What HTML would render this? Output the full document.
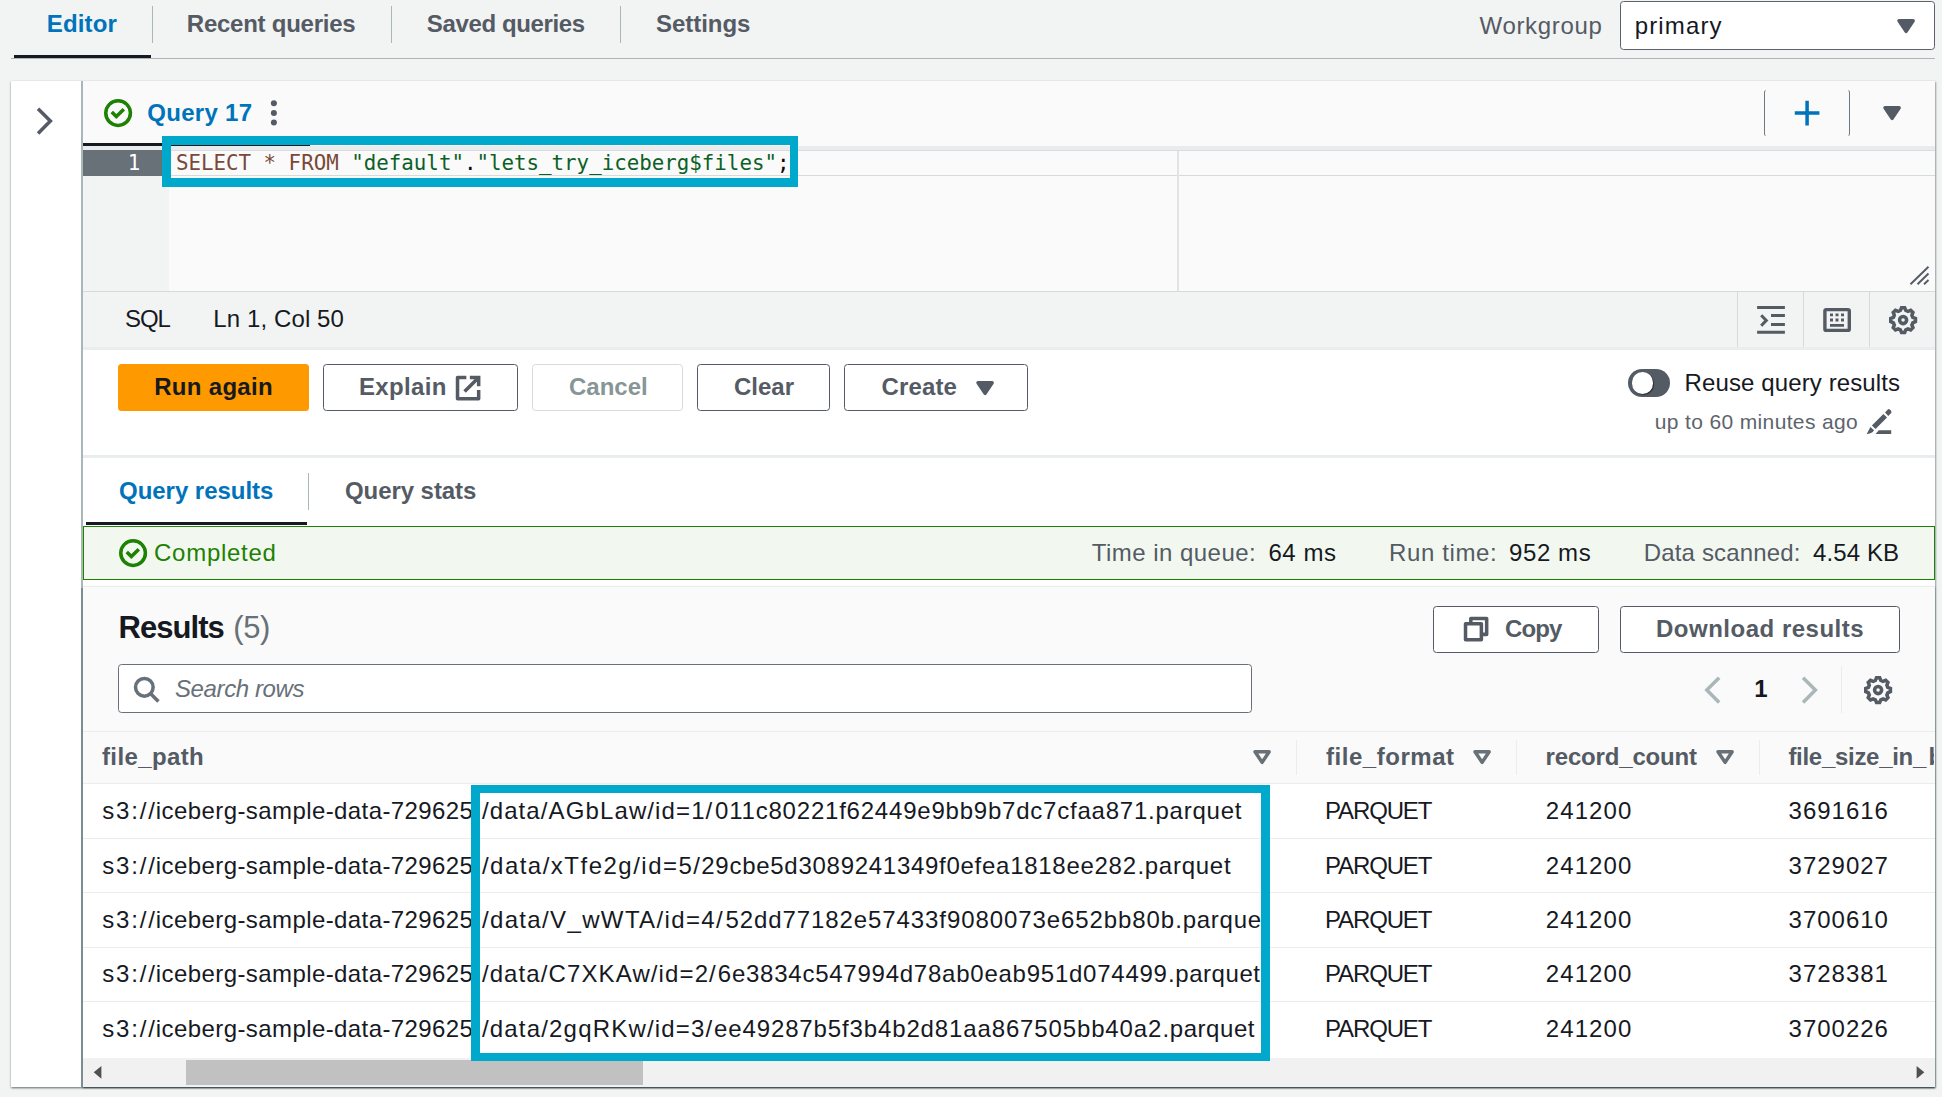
<!DOCTYPE html>
<html lang="en">
<head>
<meta charset="utf-8">
<title>Athena query editor</title>
<style>
html,body{margin:0;padding:0}
body{width:1942px;height:1097px;position:relative;overflow:hidden;background:#f2f3f3;font-family:"Liberation Sans","DejaVu Sans",sans-serif;}
.a{position:absolute;box-sizing:border-box}
.t{position:absolute;white-space:pre;font-kerning:normal}
.m{font-family:"DejaVu Sans Mono","Liberation Mono",monospace}
.clip{position:absolute;overflow:hidden}
.ic{position:absolute;width:28.2px;height:28.2px;overflow:visible;fill:none;stroke:#545b64;stroke-width:2}
.btn{position:absolute;box-sizing:border-box;border:1.5px solid #545b64;border-radius:3.5px;background:#fff}
</style>
</head>
<body>
<!-- top tab bar -->
<div class="a" style="left:11px;top:58px;width:1924px;height:1.3px;background:#aab7b8"></div>
<div class="a" style="left:14px;top:54.6px;width:137px;height:3.6px;background:#16191f"></div>
<div class="a" style="left:152px;top:6px;width:1px;height:37px;background:#aab7b8"></div>
<div class="a" style="left:391px;top:6px;width:1px;height:37px;background:#aab7b8"></div>
<div class="a" style="left:620px;top:6px;width:1px;height:37px;background:#aab7b8"></div>
<div class="a" style="left:1620px;top:1px;width:315px;height:49px;border:1.5px solid #5b626b;border-radius:3.5px;background:#fff"></div>
<svg class="ic" style="left:1891.8px;top:12.15px" viewBox="0 0 16 16"><path d="M4 5h8l-4 6-4-6z" fill="#545b64" stroke-linejoin="round"/></svg>

<!-- main container -->
<div class="a" style="left:11px;top:81px;width:1924px;height:1006px;background:#fff;box-shadow:0 1px 2px 0 rgba(0,28,36,.45),1px 1px 2px 0 rgba(0,28,36,.25)"></div>
<svg class="ic" style="left:30.9px;top:107.1px" viewBox="0 0 16 16"><path d="M4 1l7 7-7 7"/></svg>
<!-- query tab bar -->
<div class="a" style="left:83px;top:81px;width:1852px;height:65px;background:#fafafa"></div>
<div class="a" style="left:83px;top:146px;width:1852px;height:4px;background:#e9ebed"></div>
<div class="a" style="left:83px;top:143px;width:227px;height:2.9px;background:#16191f"></div>
<svg class="ic" style="left:103.8px;top:98.9px;stroke:#1d8102" viewBox="0 0 16 16"><circle cx="8" cy="8" r="7"/><path d="M4.4 7.4L7 10l4.25-4.25"/></svg>
<svg class="a" style="left:268px;top:98px;width:12px;height:30px" viewBox="0 0 12 30"><circle cx="5.9" cy="5.2" r="3" fill="#545b64"/><circle cx="5.9" cy="14.9" r="3" fill="#545b64"/><circle cx="5.9" cy="24.5" r="3" fill="#545b64"/></svg>
<div class="a" style="left:1764px;top:90px;width:86px;height:46px;border-left:1px solid #6f7880;border-right:1px solid #6f7880;border-radius:2.5px"></div>
<svg class="ic" style="left:1792.5px;top:98.9px;stroke:#0073bb" viewBox="0 0 16 16"><path d="M8 1v14M15 8H1"/></svg>
<svg class="ic" style="left:1877.8px;top:98.9px" viewBox="0 0 16 16"><path d="M4 5h8l-4 6-4-6z" fill="#545b64" stroke-linejoin="round"/></svg>

<!-- editor -->
<div class="a" style="left:83px;top:150px;width:1852px;height:142px;background:#fafafa;border-top:1px solid #d9dddd;border-bottom:1px solid #d5dbdb"></div>
<div class="a" style="left:83px;top:150px;width:86px;height:141px;background:#f2f3f3"></div>
<div class="a" style="left:169px;top:151px;width:1766px;height:24.9px;border-bottom:1px solid #d5dbdb"></div>
<div class="a" style="left:83px;top:150px;width:86px;height:26px;background:#687078"></div>
<div class="a" style="left:1177px;top:151px;width:1.5px;height:140px;background:#e2e3e3"></div>
<svg class="a" style="left:1906px;top:262px;width:26px;height:26px" viewBox="0 0 26 26"><path d="M4.5 22.2L22.5 4.7M11.5 22.2L22.5 11.5M18 22.2L22.5 18" stroke="#545b64" stroke-width="1.9" fill="none"/></svg>

<!-- status bar -->
<div class="a" style="left:83px;top:292px;width:1852px;height:55.3px;background:#f2f3f3"></div>
<div class="a" style="left:83px;top:347.3px;width:1852px;height:2.9px;background:#eaeded"></div>
<div class="a" style="left:1737.2px;top:292px;width:1px;height:55px;background:#d5dbdb"></div>
<div class="a" style="left:1803.1px;top:292px;width:1px;height:55px;background:#d5dbdb"></div>
<div class="a" style="left:1868.9px;top:292px;width:1px;height:55px;background:#d5dbdb"></div>
<svg class="a" style="left:1750px;top:300px;width:40px;height:40px" viewBox="1750 300 40 40"><path d="M1757.1 307.5H1784.9M1771 315.6H1784.9M1771 324.5H1784.9M1757.1 332.2H1784.9" stroke="#545b64" stroke-width="3" fill="none"/><path d="M1761.2 315.2L1766.3 320.4L1761.2 325.8" stroke="#545b64" stroke-width="3" fill="none"/></svg>
<svg class="a" style="left:1818px;top:302px;width:38px;height:36px" viewBox="1818 302 38 36"><rect x="1824.9" y="309.6" width="24.4" height="20.8" rx="1.5" stroke="#545b64" stroke-width="3.4" fill="none"/><path d="M1830 313.4h3v2.8h-3zM1835.5 313.4h3v2.8h-3zM1841 313.4h3v2.8h-3zM1830 318.6h3v2.8h-3zM1835.5 318.6h3v2.8h-3zM1841 318.6h3v2.8h-3zM1830 323.9h14v2.9h-14z" fill="#545b64"/></svg>
<svg class="ic" style="left:1888.95px;top:306.05px;stroke:#545b64" viewBox="0 0 16 16"><path d="M6.45 2.50L7.10 1.00L8.90 1.00L9.55 2.50L10.79 3.01L12.31 2.41L13.59 3.69L12.99 5.21L13.50 6.45L15.00 7.10L15.00 8.90L13.50 9.55L12.99 10.79L13.59 12.31L12.31 13.59L10.79 12.99L9.55 13.50L8.90 15.00L7.10 15.00L6.45 13.50L5.21 12.99L3.69 13.59L2.41 12.31L3.01 10.79L2.50 9.55L1.00 8.90L1.00 7.10L2.50 6.45L3.01 5.21L2.41 3.69L3.69 2.41L5.21 3.01Z"/><circle cx="8" cy="8" r="2"/></svg>

<!-- buttons row -->
<div class="a" style="left:118px;top:364px;width:191px;height:47px;background:#ff9900;border-radius:3.5px"></div>
<div class="btn" style="left:323px;top:364px;width:195px;height:47px"></div>
<div class="btn" style="left:532px;top:364px;width:151px;height:47px;border-color:#d5dbdb"></div>
<div class="btn" style="left:697px;top:364px;width:133px;height:47px"></div>
<div class="btn" style="left:844px;top:364px;width:184px;height:47px"></div>
<svg class="ic" style="left:454.2px;top:373.6px" viewBox="0 0 16 16"><path d="M10 2h4v4" stroke-linecap="square"/><path d="M6 10l8-8"/><path d="M14 9.048V14H2V2h5" stroke-linejoin="round"/></svg>
<svg class="ic" style="left:970.9px;top:374.2px" viewBox="0 0 16 16"><path d="M4 5h8l-4 6-4-6z" fill="#545b64" stroke-linejoin="round"/></svg>
<!-- toggle -->
<div class="a" style="left:1628px;top:369px;width:42px;height:28px;border-radius:14px;background:#545b64"></div>
<div class="a" style="left:1631.5px;top:372.3px;width:21.5px;height:21.5px;border-radius:50%;background:#fff;box-shadow:1px 1px 1px rgba(0,0,0,.5)"></div>
<svg class="a" style="left:1860px;top:404px;width:36px;height:34px" viewBox="1860 404 36 34"><path d="M1866.6 434.3L1870.4 427L1874.1 430.3Q1872.6 432.6 1870.4 433.2ZM1871.9 425.5L1883.4 414L1887 417.5L1875.5 429ZM1885 412.4L1888.3 409.1Q1891.6 409.6 1891.4 412.8L1888.3 415.9ZM1875.5 434.1L1878.8 430.3H1891.2V434.1Z" fill="#545b64"/></svg>

<!-- result tabs -->
<div class="a" style="left:83px;top:455.2px;width:1852px;height:2.9px;background:#eaeded"></div>
<div class="a" style="left:308px;top:473px;width:1px;height:37px;background:#aab7b8"></div>
<div class="a" style="left:86px;top:522px;width:221px;height:3.2px;background:#16191f"></div>

<!-- completed -->
<div class="a" style="left:83px;top:525.8px;width:1852px;height:54px;background:#f2f8f0;border:1.2px solid #1d8102"></div>
<svg class="ic" style="left:118.9px;top:538.9px;stroke:#1d8102" viewBox="0 0 16 16"><circle cx="8" cy="8" r="7"/><path d="M4.4 7.4L7 10l4.25-4.25"/></svg>

<!-- results -->
<div class="a" style="left:83px;top:586px;width:1852px;height:501px;box-shadow:0 1px 1.5px 0 rgba(0,28,36,.7)"></div>
<div class="a" style="left:83px;top:586px;width:1852px;height:472px;background:#fafafa;border-top:1px solid #eaeded"></div>
<div class="btn" style="left:1433px;top:606px;width:166px;height:47px"></div>
<div class="btn" style="left:1620px;top:606px;width:280px;height:47px"></div>
<svg class="ic" style="left:1462.2px;top:614.8px" viewBox="0 0 16 16"><path d="M2 5h9v9H2z" stroke-linejoin="round"/><path d="M5 5V2h9v9h-3" stroke-linejoin="round"/></svg>
<div class="a" style="left:118px;top:664px;width:1134px;height:48.6px;border:1.5px solid #687078;border-radius:3.5px;background:#fff"></div>
<svg class="ic" style="left:132.2px;top:675.2px;stroke:#687078" viewBox="0 0 16 16"><circle cx="7" cy="7" r="5"/><path d="M15 15l-4.5-4.5"/></svg>
<svg class="ic" style="left:1697.9px;top:676.2px;stroke:#aab7b8" viewBox="0 0 16 16"><path d="M12 1L5 8l7 7"/></svg>
<svg class="ic" style="left:1795.9px;top:676.2px;stroke:#aab7b8" viewBox="0 0 16 16"><path d="M4 1l7 7-7 7"/></svg>
<div class="a" style="left:1841px;top:666px;width:1px;height:47px;background:#eaeded"></div>
<svg class="ic" style="left:1863.9px;top:675.6px;stroke:#545b64" viewBox="0 0 16 16"><path d="M6.45 2.50L7.10 1.00L8.90 1.00L9.55 2.50L10.79 3.01L12.31 2.41L13.59 3.69L12.99 5.21L13.50 6.45L15.00 7.10L15.00 8.90L13.50 9.55L12.99 10.79L13.59 12.31L12.31 13.59L10.79 12.99L9.55 13.50L8.90 15.00L7.10 15.00L6.45 13.50L5.21 12.99L3.69 13.59L2.41 12.31L3.01 10.79L2.50 9.55L1.00 8.90L1.00 7.10L2.50 6.45L3.01 5.21L2.41 3.69L3.69 2.41L5.21 3.01Z"/><circle cx="8" cy="8" r="2"/></svg>

<!-- table -->
<div class="a" style="left:83px;top:731px;width:1852px;height:53px;background:#fafafa;border-top:1px solid #eaeded;border-bottom:1px solid #eaeded"></div>
<div class="a" style="left:83px;top:784px;width:1852px;height:274px;background:#fff"></div>
<div class="a" style="left:83px;top:838px;width:1852px;height:1px;background:#eaeded"></div>
<div class="a" style="left:83px;top:892px;width:1852px;height:1px;background:#eaeded"></div>
<div class="a" style="left:83px;top:947px;width:1852px;height:1px;background:#eaeded"></div>
<div class="a" style="left:83px;top:1001px;width:1852px;height:1px;background:#eaeded"></div>
<div class="a" style="left:1296px;top:740px;width:1px;height:35px;background:#eaeded"></div>
<div class="a" style="left:1516.3px;top:740px;width:1px;height:35px;background:#eaeded"></div>
<div class="a" style="left:1759px;top:740px;width:1px;height:35px;background:#eaeded"></div>
<svg class="ic" style="left:1247.9px;top:742.7px;stroke:#687078" viewBox="0 0 16 16"><path d="M4 5h8l-4 6-4-6z" stroke-linejoin="round"/></svg>
<svg class="ic" style="left:1467.8px;top:742.7px;stroke:#687078" viewBox="0 0 16 16"><path d="M4 5h8l-4 6-4-6z" stroke-linejoin="round"/></svg>
<svg class="ic" style="left:1710.6px;top:742.7px;stroke:#687078" viewBox="0 0 16 16"><path d="M4 5h8l-4 6-4-6z" stroke-linejoin="round"/></svg>

<!-- scrollbar -->
<div class="a" style="left:83px;top:1058px;width:1852px;height:29px;background:#f1f1f1"></div>
<div class="a" style="left:186px;top:1060px;width:457px;height:25px;background:#c1c1c1"></div>
<svg class="a" style="left:90px;top:1062px;width:16px;height:20px" viewBox="0 0 16 20"><path d="M3.7 10.3L11.4 3.9V16.8z" fill="#505050"/></svg>
<svg class="a" style="left:1912.3px;top:1062px;width:16px;height:20px" viewBox="0 0 16 20"><path d="M12.3 10.3L4.6 3.9V16.8z" fill="#505050"/></svg>

<!-- sidebar border -->
<div class="a" style="left:81.2px;top:81px;width:1.8px;height:507px;background:#aab7b8"></div>
<div class="a" style="left:81.2px;top:588px;width:1.8px;height:499px;background:#7d8b93"></div>

<span class="t" style="left:46.80px;top:11.90px;font-size:24px;line-height:24px;color:#0073bb;font-weight:700;letter-spacing:0.162px;">Editor</span>
<span class="t" style="left:186.80px;top:11.90px;font-size:24px;line-height:24px;color:#545b64;font-weight:700;letter-spacing:-0.248px;">Recent queries</span>
<span class="t" style="left:426.80px;top:11.90px;font-size:24px;line-height:24px;color:#545b64;font-weight:700;letter-spacing:-0.367px;">Saved queries</span>
<span class="t" style="left:656.00px;top:11.90px;font-size:24px;line-height:24px;color:#545b64;font-weight:700;letter-spacing:-0.047px;">Settings</span>
<span class="t" style="left:1479.50px;top:13.90px;font-size:24px;line-height:24px;color:#545b64;letter-spacing:0.676px;">Workgroup</span>
<span class="t" style="left:1634.80px;top:13.90px;font-size:24px;line-height:24px;color:#16191f;letter-spacing:1.116px;">primary</span>
<span class="t" style="left:147.30px;top:100.90px;font-size:24px;line-height:24px;color:#0073bb;font-weight:700;letter-spacing:0.289px;">Query 17</span>
<span class="t m" style="left:127.80px;top:152.62px;font-size:20.75px;line-height:20.75px;color:#ffffff;">1</span>
<span class="t m" style="left:175.90px;top:152.60px;font-size:20.8px;line-height:20.8px;color:#080808;"><span style="color:#794938">SELECT</span> <span style="color:#794938">*</span> <span style="color:#794938">FROM</span> <span style="color:#0b6125">"default"</span>.<span style="color:#0b6125">"lets_try_iceberg$files"</span>;</span>
<span class="t" style="left:125.00px;top:306.90px;font-size:24px;line-height:24px;color:#16191f;letter-spacing:-1.088px;">SQL</span>
<span class="t" style="left:213.20px;top:306.90px;font-size:24px;line-height:24px;color:#16191f;letter-spacing:0.121px;">Ln 1, Col 50</span>
<span class="t" style="left:154.20px;top:374.90px;font-size:24px;line-height:24px;color:#16191f;font-weight:700;letter-spacing:0.307px;">Run again</span>
<span class="t" style="left:359.00px;top:374.90px;font-size:24px;line-height:24px;color:#545b64;font-weight:700;letter-spacing:0.350px;">Explain</span>
<span class="t" style="left:569.00px;top:374.90px;font-size:24px;line-height:24px;color:#879596;font-weight:700;letter-spacing:-0.007px;">Cancel</span>
<span class="t" style="left:734.00px;top:374.90px;font-size:24px;line-height:24px;color:#545b64;font-weight:700;letter-spacing:0.001px;">Clear</span>
<span class="t" style="left:881.40px;top:374.90px;font-size:24px;line-height:24px;color:#545b64;font-weight:700;letter-spacing:0.168px;">Create</span>
<span class="t" style="left:1684.60px;top:370.90px;font-size:24px;line-height:24px;color:#16191f;letter-spacing:0.109px;">Reuse query results</span>
<span class="t" style="left:1654.80px;top:411.40px;font-size:21px;line-height:21px;color:#5d646d;letter-spacing:0.355px;">up to 60 minutes ago</span>
<span class="t" style="left:119.00px;top:478.90px;font-size:24px;line-height:24px;color:#0073bb;font-weight:700;letter-spacing:-0.032px;">Query results</span>
<span class="t" style="left:345.00px;top:478.90px;font-size:24px;line-height:24px;color:#545b64;font-weight:700;letter-spacing:-0.071px;">Query stats</span>
<span class="t" style="left:154.00px;top:540.90px;font-size:24px;line-height:24px;color:#1d8102;letter-spacing:0.736px;">Completed</span>
<span class="t" style="left:1091.80px;top:540.90px;font-size:24px;line-height:24px;color:#545b64;letter-spacing:0.462px;">Time in queue:</span>
<span class="t" style="left:1268.40px;top:540.90px;font-size:24px;line-height:24px;color:#16191f;letter-spacing:0.561px;">64 ms</span>
<span class="t" style="left:1389.00px;top:540.90px;font-size:24px;line-height:24px;color:#545b64;letter-spacing:0.621px;">Run time:</span>
<span class="t" style="left:1509.00px;top:540.90px;font-size:24px;line-height:24px;color:#16191f;letter-spacing:0.599px;">952 ms</span>
<span class="t" style="left:1643.80px;top:540.90px;font-size:24px;line-height:24px;color:#545b64;letter-spacing:0.158px;">Data scanned:</span>
<span class="t" style="left:1813.00px;top:540.90px;font-size:24px;line-height:24px;color:#16191f;letter-spacing:0.102px;">4.54 KB</span>
<span class="t" style="left:118.60px;top:612.40px;font-size:31px;line-height:31px;color:#16191f;font-weight:700;letter-spacing:-0.973px;">Results</span>
<span class="t" style="left:233.20px;top:612.40px;font-size:31px;line-height:31px;color:#687078;letter-spacing:-0.382px;">(5)</span>
<span class="t" style="left:1505.00px;top:616.90px;font-size:24px;line-height:24px;color:#545b64;font-weight:700;letter-spacing:-0.884px;">Copy</span>
<span class="t" style="left:1656.00px;top:616.90px;font-size:24px;line-height:24px;color:#545b64;font-weight:700;letter-spacing:0.508px;">Download results</span>
<span class="t" style="left:175.00px;top:676.90px;font-size:24px;line-height:24px;color:#687078;font-style:italic;letter-spacing:-0.388px;">Search rows</span>
<span class="t" style="left:1754.30px;top:676.90px;font-size:24px;line-height:24px;color:#16191f;font-weight:700;">1</span>
<span class="t" style="left:102.00px;top:744.90px;font-size:24px;line-height:24px;color:#545b64;font-weight:700;letter-spacing:0.372px;">file_path</span>
<span class="t" style="left:1326.00px;top:744.90px;font-size:24px;line-height:24px;color:#545b64;font-weight:700;letter-spacing:0.530px;">file_format</span>
<span class="t" style="left:1545.60px;top:744.90px;font-size:24px;line-height:24px;color:#545b64;font-weight:700;letter-spacing:-0.179px;">record_count</span>
<span class="t" style="left:1788.40px;top:744.90px;font-size:24px;line-height:24px;color:#545b64;font-weight:700;letter-spacing:-0.289px;">file_size_in_</span>
<div class="clip" style="left:1927px;top:735px;width:7.400000000000091px;height:45px"><span class="t" style="left:1.60px;top:9.90px;font-size:24px;line-height:24px;color:#545b64;font-weight:700;">bytes</span></div>
<span class="t" style="left:102.20px;top:798.90px;font-size:24px;line-height:24px;color:#16191f;letter-spacing:1.829px;">s3://</span>
<div class="clip" style="left:150px;top:789px;width:320.7px;height:44px"><span class="t" style="left:5.80px;top:9.90px;font-size:24px;line-height:24px;color:#16191f;letter-spacing:0.412px;">iceberg-sample-data-729625</span></div>
<span class="t" style="left:481.90px;top:798.90px;font-size:24px;line-height:24px;color:#16191f;letter-spacing:1.111px;">/data/AGbLaw/id=1/</span>
<span class="t" style="left:715.10px;top:798.90px;font-size:24px;line-height:24px;color:#16191f;letter-spacing:0.784px;">011c80221f62449e9bb9b7dc7cfaa871</span>
<span class="t" style="left:1148.10px;top:798.90px;font-size:24px;line-height:24px;color:#16191f;letter-spacing:0.757px;">.parquet</span>
<span class="t" style="left:1325.00px;top:798.90px;font-size:24px;line-height:24px;color:#16191f;letter-spacing:-1.146px;">PARQUET</span>
<span class="t" style="left:1545.80px;top:798.90px;font-size:24px;line-height:24px;color:#16191f;letter-spacing:1.092px;">241200</span>
<span class="t" style="left:1788.60px;top:798.90px;font-size:24px;line-height:24px;color:#16191f;letter-spacing:0.986px;">3691616</span>
<span class="t" style="left:102.20px;top:853.90px;font-size:24px;line-height:24px;color:#16191f;letter-spacing:1.829px;">s3://</span>
<div class="clip" style="left:150px;top:844px;width:320.7px;height:44px"><span class="t" style="left:5.80px;top:9.90px;font-size:24px;line-height:24px;color:#16191f;letter-spacing:0.412px;">iceberg-sample-data-729625</span></div>
<span class="t" style="left:481.90px;top:853.90px;font-size:24px;line-height:24px;color:#16191f;letter-spacing:1.487px;">/data/xTfe2g/id=5/</span>
<span class="t" style="left:701.30px;top:853.90px;font-size:24px;line-height:24px;color:#16191f;letter-spacing:0.720px;">29cbe5d3089241349f0efea1818ee282</span>
<span class="t" style="left:1137.40px;top:853.90px;font-size:24px;line-height:24px;color:#16191f;letter-spacing:0.729px;">.parquet</span>
<span class="t" style="left:1325.00px;top:853.90px;font-size:24px;line-height:24px;color:#16191f;letter-spacing:-1.146px;">PARQUET</span>
<span class="t" style="left:1545.80px;top:853.90px;font-size:24px;line-height:24px;color:#16191f;letter-spacing:1.092px;">241200</span>
<span class="t" style="left:1788.60px;top:853.90px;font-size:24px;line-height:24px;color:#16191f;letter-spacing:0.986px;">3729027</span>
<span class="t" style="left:102.20px;top:907.90px;font-size:24px;line-height:24px;color:#16191f;letter-spacing:1.829px;">s3://</span>
<div class="clip" style="left:150px;top:898px;width:320.7px;height:44px"><span class="t" style="left:5.80px;top:9.90px;font-size:24px;line-height:24px;color:#16191f;letter-spacing:0.412px;">iceberg-sample-data-729625</span></div>
<span class="t" style="left:481.90px;top:907.90px;font-size:24px;line-height:24px;color:#16191f;letter-spacing:1.360px;">/data/V_wWTA/id=4/</span>
<span class="t" style="left:725.40px;top:907.90px;font-size:24px;line-height:24px;color:#16191f;letter-spacing:0.913px;">52dd77182e57433f9080073e652bb80b</span>
<div class="clip" style="left:1174.3px;top:898px;width:87.0px;height:44px"><span class="t" style="left:1.00px;top:9.90px;font-size:24px;line-height:24px;color:#16191f;letter-spacing:0.729px;">.parquet</span></div>
<span class="t" style="left:1325.00px;top:907.90px;font-size:24px;line-height:24px;color:#16191f;letter-spacing:-1.146px;">PARQUET</span>
<span class="t" style="left:1545.80px;top:907.90px;font-size:24px;line-height:24px;color:#16191f;letter-spacing:1.092px;">241200</span>
<span class="t" style="left:1788.60px;top:907.90px;font-size:24px;line-height:24px;color:#16191f;letter-spacing:0.986px;">3700610</span>
<span class="t" style="left:102.20px;top:961.90px;font-size:24px;line-height:24px;color:#16191f;letter-spacing:1.829px;">s3://</span>
<div class="clip" style="left:150px;top:952px;width:320.7px;height:44px"><span class="t" style="left:5.80px;top:9.90px;font-size:24px;line-height:24px;color:#16191f;letter-spacing:0.412px;">iceberg-sample-data-729625</span></div>
<span class="t" style="left:481.90px;top:961.90px;font-size:24px;line-height:24px;color:#16191f;letter-spacing:1.108px;">/data/C7XKAw/id=2/</span>
<span class="t" style="left:717.80px;top:961.90px;font-size:24px;line-height:24px;color:#16191f;letter-spacing:0.754px;">6e3834c547994d78ab0eab951d074499</span>
<span class="t" style="left:1168.10px;top:961.90px;font-size:24px;line-height:24px;color:#16191f;letter-spacing:0.543px;">.parquet</span>
<span class="t" style="left:1325.00px;top:961.90px;font-size:24px;line-height:24px;color:#16191f;letter-spacing:-1.146px;">PARQUET</span>
<span class="t" style="left:1545.80px;top:961.90px;font-size:24px;line-height:24px;color:#16191f;letter-spacing:1.092px;">241200</span>
<span class="t" style="left:1788.60px;top:961.90px;font-size:24px;line-height:24px;color:#16191f;letter-spacing:0.986px;">3728381</span>
<span class="t" style="left:102.20px;top:1016.90px;font-size:24px;line-height:24px;color:#16191f;letter-spacing:1.829px;">s3://</span>
<div class="clip" style="left:150px;top:1007px;width:320.7px;height:44px"><span class="t" style="left:5.80px;top:9.90px;font-size:24px;line-height:24px;color:#16191f;letter-spacing:0.412px;">iceberg-sample-data-729625</span></div>
<span class="t" style="left:481.90px;top:1016.90px;font-size:24px;line-height:24px;color:#16191f;letter-spacing:1.190px;">/data/2gqRKw/id=3/</span>
<span class="t" style="left:714.10px;top:1016.90px;font-size:24px;line-height:24px;color:#16191f;letter-spacing:0.865px;">ee49287b5f3b4b2d81aa867505bb40a2</span>
<span class="t" style="left:1162.50px;top:1016.90px;font-size:24px;line-height:24px;color:#16191f;letter-spacing:0.557px;">.parquet</span>
<span class="t" style="left:1325.00px;top:1016.90px;font-size:24px;line-height:24px;color:#16191f;letter-spacing:-1.146px;">PARQUET</span>
<span class="t" style="left:1545.80px;top:1016.90px;font-size:24px;line-height:24px;color:#16191f;letter-spacing:1.092px;">241200</span>
<span class="t" style="left:1788.60px;top:1016.90px;font-size:24px;line-height:24px;color:#16191f;letter-spacing:0.986px;">3700226</span>

<!-- annotations -->
<div class="a" style="left:162px;top:136px;width:636px;height:51px;border:solid #00a8cc;border-width:9px 8px 9px 9px"></div>
<div class="a" style="left:471px;top:785px;width:799px;height:276px;border:solid #00a8cc;border-width:8px 9px 8px 9px"></div>
</body>
</html>
